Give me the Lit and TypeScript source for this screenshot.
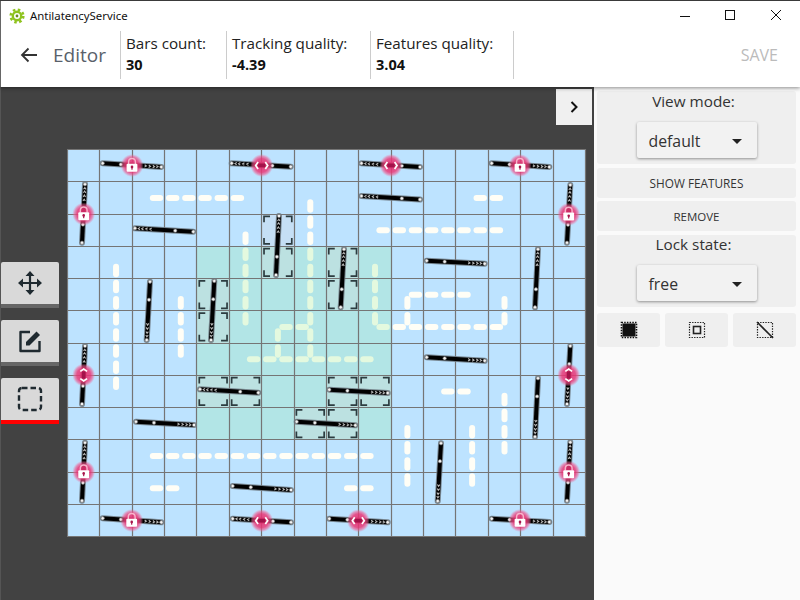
import { LitElement, html, css, svg } from "lit";
import { customElement } from "lit/decorators.js";

const X0 = 67.5, Y0 = 149.5, CW = 32.37, CH = 32.25;
const lx = (i: number) => X0 + CW * i;
const ly = (j: number) => Y0 + CH * j;
const px = (v: number) => Math.floor(v) + 0.5;
const range = (a: number, b: number) => Array.from({ length: b - a + 1 }, (_, i) => a + i);

// [row centre, first half-cell, last half-cell]
const hDashes: [number, number, number][] = [
  [1, 5, 10], [1, 25, 26], [2, 19, 26], [4, 21, 24], [5, 13, 14], [5, 19, 26],
  [6, 11, 18], [7, 23, 24], [9, 5, 18], [10, 5, 6], [10, 17, 18],
];
// [column centre, first half-cell, last half-cell]
const vDashes: [number, number, number][] = [
  [1, 7, 14], [3, 9, 12], [5, 5, 10], [6, 11, 12], [7, 3, 12], [9, 7, 10],
  [10, 9, 10], [10, 17, 20], [12, 17, 20], [13, 9, 10], [13, 15, 18],
];
// selected cells [col,row]
const selected: [number, number][] = [
  [6, 2], [6, 3], [8, 3], [8, 4], [4, 4], [4, 5], [4, 7], [5, 7], [8, 7], [9, 7], [7, 8], [8, 8],
];
type Bar = [number, number, number, number, string?, number?, number?];
// start x,y  end x,y (chevrons near end), marker kind and place
const bars: Bar[] = [
  [102.7, 163.3, 161.3, 167, "lock", 132, 165.5],
  [290.7, 166.7, 231.7, 163.3, "h", 261.7, 165.5],
  [420, 167, 361.5, 163.3, "h", 391, 165.5],
  [491.7, 163.3, 549.3, 167, "lock", 520, 165.5],
  [420, 199.5, 361.5, 196, undefined],
  [82, 242.7, 85, 184.3, "lock", 83.7, 214],
  [193.3, 231.7, 135, 228.3],
  [276, 275, 279, 216],
  [340.7, 307.3, 344, 249.3],
  [214.3, 281, 211, 340],
  [82, 404, 85, 346, "v", 83.7, 375],
  [150, 281.7, 146.7, 340],
  [136, 421.7, 194, 425],
  [82, 500.7, 85, 442.7, "lock", 83.7, 472],
  [102.7, 518.3, 161.3, 522.3, "lock", 131.7, 520.5],
  [258.3, 392.7, 200, 389.3],
  [329.3, 389.7, 387.7, 393],
  [296.7, 421.7, 355.3, 425.3],
  [232.7, 486, 291, 490],
  [291, 522.3, 232.7, 518.7, "h", 261.7, 520.7],
  [329.3, 518.7, 387.7, 522.3, "h", 358.3, 520.7],
  [567, 242.7, 570.3, 185, "lock", 568.7, 214.3],
  [426.7, 260.7, 484.7, 263.7],
  [535, 307.3, 538, 249.3],
  [426.7, 357.3, 484.7, 360.7],
  [570.3, 346, 567, 404, "v", 568.7, 375],
  [538, 378.3, 535, 436.7],
  [441, 443.3, 437.7, 501],
  [567, 500.7, 570.3, 442.3, "lock", 568.7, 472],
  [491.7, 518.7, 549.3, 522, "lock", 520, 520.5],
];

function barSvg(b: Bar) {
  const [x1, y1, x2, y2] = b;
  const at = (t: number) => [x1 + (x2 - x1) * t, y1 + (y2 - y1) * t];
  const ang = (Math.atan2(y2 - y1, x2 - x1) * 180) / Math.PI;
  const [mx, my] = at(0.31);
  return svg`<g>
    <line x1=${x1} y1=${y1} x2=${x2} y2=${y2} stroke="#6d7880" stroke-width="6" stroke-linecap="round" opacity="0.85"></line>
    <line x1=${x1} y1=${y1} x2=${x2} y2=${y2} stroke="#000" stroke-width="4"></line>
    ${[0.73, 0.8, 0.87, 0.93].map((t) => {
      const [cx, cy] = at(t);
      return svg`<path transform="translate(${cx} ${cy}) rotate(${ang})" d="M-0.9 -1.2L0.9 0L-0.9 1.2" fill="none" stroke="#b8b8b8" stroke-width="1.1"></path>`;
    })}
    ${[[x1, y1], [mx, my], [x2, y2]].map(
      ([cx, cy]) => svg`<circle cx=${cx} cy=${cy} r="1.7" fill="#f4f4f4" stroke="#666" stroke-width="0.6"></circle>`,
    )}
  </g>`;
}

function markerSvg(b: Bar) {
  const kind = b[4];
  if (!kind) return null;
  const x = b[5] as number, y = b[6] as number;
  let inner;
  if (kind === "lock") {
    inner = svg`<path d="M-3.4 -1.5V-3.6A3.4 3.4 0 0 1 3.4 -3.6V-1.5" fill="none" stroke="#f7b4cb" stroke-width="1.4"></path>
      <rect x="-5.4" y="-1.8" width="10.8" height="8" rx="1" fill="#fff"></rect>
      <circle cx="0" cy="1.4" r="1.3" fill="#a8164c"></circle><rect x="-0.6" y="1.4" width="1.2" height="2.8" fill="#a8164c"></rect>`;
  } else {
    const rot = kind === "v" ? 90 : 0;
    inner = svg`<g transform="rotate(${rot})">
      <rect x="-3.5" y="-1.8" width="7" height="3.6" fill="#a3124a"></rect>
      <path d="M-3.6 -3.4L-6 0L-3.6 3.4M3.6 -3.4L6 0L3.6 3.4" fill="none" stroke="#fff" stroke-width="1.7"></path></g>`;
  }
  return svg`<g transform="translate(${x} ${y})">
    <circle r="11.5" fill="url(#pink)"></circle>${inner}</g>`;
}

function dash(x: number, y: number, horizontal: boolean) {
  const w = horizontal ? 13.4 : 6, h = horizontal ? 6 : 13.4;
  return svg`<rect x=${x - w / 2} y=${y - h / 2} width=${w} height=${h} rx="3" fill="#fffef6"></rect>`;
}

function stage() {
  const halfX = (k: number) => X0 + (k + 0.5) * (CW / 2);
  const halfY = (k: number) => Y0 + (k + 0.5) * (CH / 2);
  return html`<svg class="field" width="520" height="389" viewBox="67 149 520 389">
    <defs>
      <radialGradient id="pink">
        <stop offset="0" stop-color="#e62a6e" stop-opacity="0.9"></stop>
        <stop offset="0.6" stop-color="#ea3a78" stop-opacity="0.85"></stop>
        <stop offset="0.8" stop-color="#ee5a90" stop-opacity="0.6"></stop>
        <stop offset="1" stop-color="#f080a8" stop-opacity="0"></stop>
      </radialGradient>
    </defs>
    <rect x="67" y="149" width="519" height="388" fill="#bde3ff"></rect>
    ${hDashes.flatMap(([r, a, b]) => range(a, b).map((k) => dash(halfX(k), ly(r + 0.5), true)))}
    ${vDashes.flatMap(([c, a, b]) => range(a, b).map((j) => dash(lx(c + 0.5), halfY(j), false)))}
    <rect x=${lx(4)} y=${ly(3)} width=${CW * 6} height=${CH * 6} fill="#94ec9c" opacity="0.25"></rect>
    ${selected.map(([c, r]) => svg`<rect x=${lx(c)} y=${ly(r)} width=${CW} height=${CH} fill="#e6d2cd" opacity="0.2"></rect>`)}
    ${range(0, 16).map((i) => svg`<line x1=${px(lx(i))} x2=${px(lx(i))} y1="149" y2="537" stroke="#757575" stroke-width="1.2"></line>`)}
    ${range(0, 12).map((j) => svg`<line y1=${px(ly(j))} y2=${px(ly(j))} x1="67" x2="586" stroke="#757575" stroke-width="1.2"></line>`)}
    ${selected.map(([c, r]) => {
      const a = lx(c) + 2.3, t = ly(r) + 2.3, b = lx(c + 1) - 2.3, u = ly(r + 1) - 2.3, n = 6;
      return svg`<path d="M${a} ${t + n}V${t}H${a + n}M${b - n} ${t}H${b}V${t + n}M${b} ${u - n}V${u}H${b - n}M${a + n} ${u}H${a}V${u - n}" fill="none" stroke="#2c3c40" stroke-width="1.7"></path>`;
    })}
    <g class="soft">
      ${bars.map(barSvg)}
      ${bars.map(markerSvg)}
    </g>
  </svg>`;
}

@customElement("app-root")
export class AppRoot extends LitElement {
  static styles = css`
    :host {
      display: flex;
      flex-direction: column;
      width: 800px;
      height: 600px;
      box-sizing: border-box;
      overflow: hidden;
      border-top: 1px solid #3a3a3a;
      background: #fafafa;
      font-family: "Open Sans", "Noto Sans", sans-serif;
      color: #222;
    }
    .soft { filter: blur(0.35px); }
    .top {
      position: relative;
      z-index: 2;
      background: #fff;
      height: 86px;
      box-shadow: 0 1px 4px rgba(0, 0, 0, 0.45);
      flex: none;
      border-left: 1px solid #666;
    }
    .titlebar {
      display: flex;
      align-items: center;
      height: 29px;
      padding: 0 1px 0 8px;
      font-size: 12px;
      color: #111;
    }
    .gear { margin-right: 5px; }
    .title { flex: 1; font-family: "Noto Sans", sans-serif; font-size: 11.4px; }
    .win { width: 46px; height: 29px; display: flex; align-items: center; justify-content: center; }
    .toolbar { display: flex; height: 48px; margin-top: 1px; align-items: stretch; }
    .nav { width: 119px; display: flex; align-items: center; }
    .back { margin-left: 19px; margin-right: 15px; }
    .editor { font-size: 19px; color: #59616a; }
    .stat {
      border-left: 1px solid #ccc;
      padding-left: 5px;
      display: flex;
      flex-direction: column;
      justify-content: center;
      font-size: 15.2px;
      line-height: 20px;
      padding-bottom: 2px;
      box-sizing: content-box;
      height: 46px;
    }
    .s1 { width: 100px; }
    .s2 { width: 138px; }
    .s3 { width: 137px; border-right: 1px solid #ccc; }
    .stat b { font-size: 14.5px; color: #111; margin-top: 2px; }
    .save { margin-left: auto; margin-right: 22px; align-self: center; font-size: 16px; color: #bbb; }
    .main { flex: 1; display: flex; min-height: 0; }
    .stage {
      position: relative;
      width: 593px;
      background: #424242;
      border-left: 1px solid #555;
      display: flex;
      align-items: flex-start;
    }
    .tools {
      width: 58px;
      margin-top: 175px;
      display: flex;
      flex-direction: column;
      gap: 12px;
      flex: none;
    }
    .tool {
      height: 46px;
      box-sizing: border-box;
      background: #d9d9d9;
      border-bottom: 4px solid #666;
      border-radius: 2px 2px 0 0;
      display: flex;
      align-items: center;
      justify-content: center;
    }
    .tool.on { border-bottom-color: #f00; }
    .field { margin: 62px 0 0 8px; display: block; flex: none; }
    .expand {
      position: absolute;
      right: 2px;
      top: 2px;
      width: 36px;
      height: 36px;
      background: #f0f0f0;
      display: flex;
      align-items: center;
      justify-content: center;
    }
    .side {
      flex: 1;
      padding: 4px 4px 0 3px;
      display: flex;
      flex-direction: column;
      gap: 4px;
    }
    .card {
      background: #efefef;
      border-radius: 3px;
      display: flex;
      flex-direction: column;
      align-items: center;
    }
    .group { height: 72px; font-size: 15.3px; line-height: 20px; color: #333; box-sizing: border-box; }
    .group > span { padding-right: 6px; }
    .g1 { height: 73px; }
    .g2 > span { margin-top: -1px; }
    .select {
      margin-top: 11px;
      width: 120px;
      height: 36px;
      box-sizing: border-box;
      padding: 2px 15px 0 12px;
      background: #f2f2f2;
      border-radius: 2px;
      box-shadow: 0 1px 3px rgba(0, 0, 0, 0.4);
      display: flex;
      align-items: center;
      justify-content: space-between;
      font-size: 15.8px;
    }
    .caret { width: 0; height: 0; border: 5px solid transparent; border-top-color: #222; border-bottom: 0; }
    .action { height: 30px; justify-content: center; font-size: 11.8px; color: #333; }
    .a2 { margin-top: -1px; font-size: 11.5px; }
    .icons { display: flex; gap: 5px; margin-top: 2px; }
    .iconbtn { width: 63px; height: 34px; justify-content: center; }
  `;

  render() {
    return html`
      <div class="top">
        <div class="titlebar">
          <svg class="gear" width="16" height="16" viewBox="0 0 16 16">
            <circle cx="8" cy="8" r="6.3" fill="none" stroke="#8fc31f" stroke-width="2.6" stroke-dasharray="2.5 2.45"></circle>
            <circle cx="8" cy="8" r="4.2" fill="none" stroke="#8fc31f" stroke-width="2.4"></circle>
            <circle cx="8" cy="8" r="1.4" fill="#6b8a20"></circle>
          </svg>
          <span class="title">AntilatencyService</span>
          <span class="win"><svg width="12" height="12" viewBox="0 0 12 12"><path d="M2 6.5H12" stroke="#111" fill="none"></path></svg></span>
          <span class="win"><svg width="12" height="12" viewBox="0 0 12 12"><rect x="1.5" y="0.5" width="9" height="9" stroke="#111" fill="none"></rect></svg></span>
          <span class="win"><svg width="12" height="12" viewBox="0 0 12 12"><path d="M1 0L11 10M11 0L1 10" stroke="#111" fill="none"></path></svg></span>
        </div>
        <div class="toolbar">
          <div class="nav">
            <svg class="back" width="18" height="16" viewBox="0 0 18 16"><path d="M17 8H2M8.5 1.5L2 8L8.5 14.5" fill="none" stroke="#333" stroke-width="1.8"></path></svg>
            <span class="editor">Editor</span>
          </div>
          <div class="stat s1"><span>Bars count:</span><b>30</b></div>
          <div class="stat s2"><span>Tracking quality:</span><b>-4.39</b></div>
          <div class="stat s3"><span>Features quality:</span><b>3.04</b></div>
          <span class="save">SAVE</span>
        </div>
      </div>
      <div class="main">
        <div class="stage">
          <div class="tools">
            <div class="tool">
              <svg width="26" height="26" viewBox="0 0 26 26" fill="#1f2a30"><path d="M1 13L6 8.5V17.5ZM25 13L20 8.5V17.5ZM13 1L8.5 6H17.5ZM13 25L8.5 20H17.5Z"></path><path d="M4 13H22M13 4V22" stroke="#1f2a30" stroke-width="2.2"></path></svg>
            </div>
            <div class="tool">
              <svg width="26" height="26" viewBox="0 0 26 26"><path d="M13 4H3.500V23H22.500V13" fill="none" stroke="#1f2a30" stroke-width="2.4" stroke-linejoin="round"></path><path d="M9 17.500V14L19.500 3.500L23 7L12.500 17.500Z" fill="#1f2a30"></path></svg>
            </div>
            <div class="tool on">
              <svg width="26" height="26" viewBox="0 0 26 26"><rect x="2" y="2" width="22" height="22" rx="3" fill="none" stroke="#1f2a30" stroke-width="2.4" stroke-dasharray="5.500 3"></rect></svg>
            </div>
          </div>
          ${stage()}
          <div class="expand">
            <svg width="12" height="14" viewBox="0 0 12 14"><path d="M3.500 2L8.500 7L3.500 12" fill="none" stroke="#111" stroke-width="2"></path></svg>
          </div>
        </div>
        <div class="side">
          <div class="card group g1">
            <span>View mode:</span>
            <div class="select"><span>default</span><i class="caret"></i></div>
          </div>
          <div class="card action">SHOW FEATURES</div>
          <div class="card action a2">REMOVE</div>
          <div class="card group g2">
            <span>Lock state:</span>
            <div class="select"><span>free</span><i class="caret"></i></div>
          </div>
          <div class="icons">
            <div class="card iconbtn">
              <svg width="18" height="18" viewBox="0 0 18 18"><rect x="2.500" y="2.500" width="13" height="13" fill="#111"></rect><rect x="1.500" y="1.500" width="15" height="15" fill="none" stroke="#111" stroke-width="1.6" stroke-dasharray="1.500 1.200"></rect></svg>
            </div>
            <div class="card iconbtn">
              <svg width="18" height="18" viewBox="0 0 18 18"><rect x="1.500" y="1.500" width="15" height="15" fill="none" stroke="#222" stroke-width="1.2" stroke-dasharray="1.400 1.200"></rect><rect x="5.500" y="5.500" width="7" height="7" fill="none" stroke="#222" stroke-width="1.600"></rect></svg>
            </div>
            <div class="card iconbtn">
              <svg width="18" height="18" viewBox="0 0 18 18"><rect x="1.500" y="1.500" width="15" height="15" fill="none" stroke="#222" stroke-width="1.2" stroke-dasharray="1.400 1.200"></rect><path d="M1 1L17 17" stroke="#222" stroke-width="1.600"></path></svg>
            </div>
          </div>
        </div>
      </div>
    `;
  }
}
